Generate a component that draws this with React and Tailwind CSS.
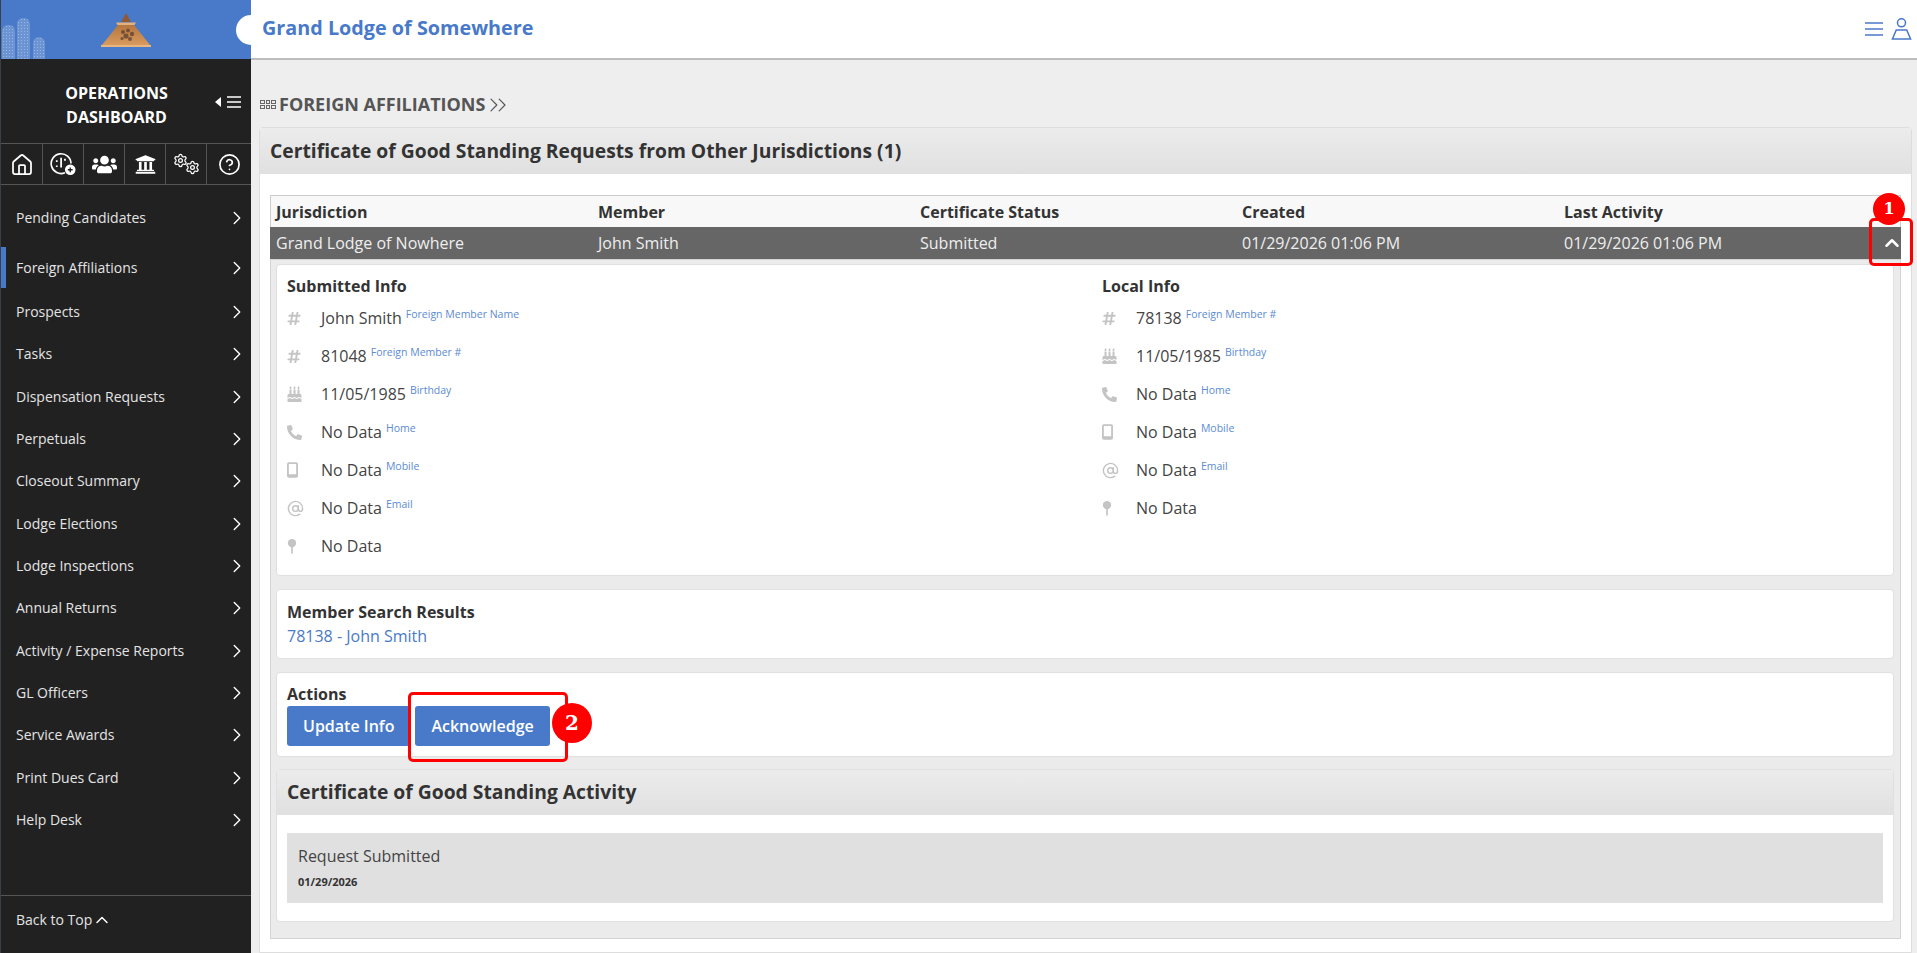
import { ChevronRight, ChevronUp, ChevronsRight, House, Settings, AtSign, CircleHelp } from 'lucide-react'
import { FaUsers, FaUniversity, FaBirthdayCake, FaHashtag, FaPhoneAlt } from 'react-icons/fa'

const NAV = [
  'Prospects', 'Tasks', 'Dispensation Requests', 'Perpetuals', 'Closeout Summary', 'Lodge Elections',
  'Lodge Inspections', 'Annual Returns', 'Activity / Expense Reports', 'GL Officers', 'Service Awards',
  'Print Dues Card', 'Help Desk',
]

const SUBMITTED = [
  { icon: 'hash', value: 'John Smith', label: 'Foreign Member Name' },
  { icon: 'hash', value: '81048', label: 'Foreign Member #' },
  { icon: 'cake', value: '11/05/1985', label: 'Birthday' },
  { icon: 'phone', value: 'No Data', label: 'Home' },
  { icon: 'mobile', value: 'No Data', label: 'Mobile' },
  { icon: 'at', value: 'No Data', label: 'Email' },
  { icon: 'pin', value: 'No Data' },
]

const LOCAL = [
  { icon: 'hash', value: '78138', label: 'Foreign Member #' },
  { icon: 'cake', value: '11/05/1985', label: 'Birthday' },
  { icon: 'phone', value: 'No Data', label: 'Home' },
  { icon: 'mobile', value: 'No Data', label: 'Mobile' },
  { icon: 'at', value: 'No Data', label: 'Email' },
  { icon: 'pin', value: 'No Data' },
]

function PinIcon() {
  return (
    <svg viewBox="0 0 12 18" className="w-[10px] h-[16px]" fill="currentColor">
      <circle cx="6" cy="5.5" r="5" />
      <rect x="5" y="10" width="2" height="8" />
    </svg>
  )
}

function MobileIcon() {
  return (
    <svg viewBox="0 0 12 17" className="w-[11px] h-[16px]" fill="currentColor">
      <path d="M2 0h8a2 2 0 0 1 2 2v13a2 2 0 0 1-2 2H2a2 2 0 0 1-2-2V2a2 2 0 0 1 2-2zm0 2v11h8V2z" fillRule="evenodd" />
    </svg>
  )
}

function InfoIcon({ name }) {
  if (name === 'hash') return <FaHashtag className="w-[14px] h-[15px]" />
  if (name === 'cake') return <FaBirthdayCake className="w-[15px] h-[16px]" />
  if (name === 'phone') return <FaPhoneAlt className="w-[15px] h-[15px]" />
  if (name === 'mobile') return <MobileIcon />
  if (name === 'at') return <AtSign className="w-[17px] h-[17px]" strokeWidth={2} />
  return <PinIcon />
}

function InfoColumn({ title, rows, className }) {
  return (
    <div className={className}>
      <h4 className="text-base font-bold text-[#333] leading-[24px] mb-[1px]">{title}</h4>
      {rows.map((row, i) => (
        <div key={i} className="h-[38px] flex items-start pt-[7px]">
          <span className="w-[34px] h-[24px] shrink-0 flex items-center text-[#c4c4c4]">
            <InfoIcon name={row.icon} />
          </span>
          <span className="text-base text-[#444] leading-[24px]">{row.value}</span>
          {row.label && <span className="ml-[4px] mt-[1px] text-[10.5px] leading-[14px] text-[#5b8bd3]">{row.label}</span>}
        </div>
      ))}
    </div>
  )
}

function GaugeIcon() {
  return (
    <svg viewBox="0 0 28 26" className="w-[27px] h-[25px]" fill="none" stroke="white">
      <path d="M15.5 21.6A10.3 10.3 0 1 1 21.8 12" strokeWidth="1.7" />
      <path d="M11.5 6v10M7 8.5v2M7 14v1.5M15.5 7v2" strokeWidth="1.8" />
      <circle cx="21" cy="18.5" r="5.5" fill="white" stroke="none" />
      <path d="M18.5 18.5h5M21 16v5" stroke="#212121" strokeWidth="1.4" />
    </svg>
  )
}

function TopIcons() {
  return (
    <div className="flex items-center gap-[8px] text-[#487ac9]">
      <svg viewBox="0 0 18 14" className="w-[18px] h-[18px]" stroke="currentColor" strokeWidth="1.5">
        <path d="M0 1h18M0 7h18M0 13h18" />
      </svg>
      <svg viewBox="0 0 22 24" className="w-[21px] h-[24px]" fill="none" stroke="currentColor" strokeWidth="1.6">
        <circle cx="11" cy="5.5" r="4.2" />
        <path d="M5.5 13h11l4 9.5H1.5z" />
      </svg>
    </div>
  )
}

function Logo() {
  return (
    <svg viewBox="0 0 50 36" className="w-[50px] h-[36px]">
      <defs>
        <linearGradient id="pyr" x1="0" y1="0" x2="0" y2="1">
          <stop offset="0" stopColor="#b5763f" />
          <stop offset="1" stopColor="#d99a5e" />
        </linearGradient>
      </defs>
      <path d="M25 0l5 9h-10z" fill="#8f5a35" />
      <path d="M15 9.5h20l-1.5 2.5h-17z" fill="#e3b27c" />
      <path d="M17 12h16l16 20H1z" fill="url(#pyr)" />
      <g fill="#5d4030" opacity="0.75">
        <circle cx="22" cy="19" r="2" />
        <circle cx="27" cy="17.5" r="2" />
        <circle cx="31" cy="21" r="2.2" />
        <circle cx="25" cy="23" r="2.6" />
        <circle cx="29" cy="26" r="2" />
        <circle cx="21" cy="25.5" r="1.6" />
      </g>
      <path d="M0 32h50v2H0z" fill="#e8b67f" />
    </svg>
  )
}

function NavChevron() {
  return <ChevronRight className="w-[22px] h-[22px] text-white" strokeWidth={1.5} />
}

export default function App() {
  return (
    <div className="h-[953px] w-full flex overflow-hidden bg-[#eeeeee] text-[#333] font-['Open_Sans',sans-serif] relative">
      {/* Sidebar */}
      <aside className="w-[251px] shrink-0 h-full bg-[#212121] border-l border-[#3b4048] flex flex-col text-white">
        <div className="h-[59px] bg-[#487ac9] flex justify-center items-start pt-[13px] relative overflow-hidden">
          <div className="absolute left-[1px] bottom-0 w-[13px] h-[34px] rounded-t-md bg-white/20 bg-[radial-gradient(circle,rgba(255,255,255,0.3)_1px,transparent_1px)] bg-[length:3px_3px]" />
          <div className="absolute left-[16px] bottom-0 w-[13px] h-[41px] rounded-t-md bg-white/20 bg-[radial-gradient(circle,rgba(255,255,255,0.3)_1px,transparent_1px)] bg-[length:3px_3px]" />
          <div className="absolute left-[32px] bottom-0 w-[12px] h-[22px] rounded-t-md bg-white/20 bg-[radial-gradient(circle,rgba(255,255,255,0.3)_1px,transparent_1px)] bg-[length:3px_3px]" />
          <Logo />
        </div>
        <div className="h-[84px] flex items-start">
          <div className="w-[230px] text-center text-base font-bold leading-[24px] pl-[1px] pt-[22px]">
            OPERATIONS<br />DASHBOARD
          </div>
          <div className="flex items-center gap-[6px] -ml-[16px] mt-[37px]">
            <span className="w-0 h-0 border-y-[5px] border-y-transparent border-r-[6px] border-r-white" />
            <svg viewBox="0 0 14 12" className="w-[14px] h-[12px]" stroke="white" strokeWidth="1.5">
              <path d="M0 1h14M0 6h14M0 11h14" />
            </svg>
          </div>
        </div>
        <div className="h-[42px] border-y border-[#555] flex">
          <div className="w-[42px] border-r border-[#555] flex items-center justify-center pt-[1px]"><House className="w-[24px] h-[24px]" strokeWidth={1.75} /></div>
          <div className="w-[41px] border-r border-[#555] flex items-center justify-center pt-[1px]"><GaugeIcon /></div>
          <div className="w-[41px] border-r border-[#555] flex items-center justify-center"><FaUsers className="w-[25px] h-[25px]" /></div>
          <div className="w-[41px] border-r border-[#555] flex items-center justify-center pt-[1px]"><FaUniversity className="w-[21px] h-[21px]" /></div>
          <div className="w-[41px] border-r border-[#555] flex items-center justify-center">
            <Settings className="w-[15px] h-[15px] shrink-0 -mt-[7px]" strokeWidth={2} />
            <Settings className="w-[15px] h-[15px] shrink-0 -ml-[3px] mt-[6px]" strokeWidth={2} />
          </div>
          <div className="flex-1 flex items-center justify-center"><CircleHelp className="w-[23px] h-[23px]" strokeWidth={1.75} /></div>
        </div>
        <nav className="pt-[12px] flex-1 text-sm text-[#e4e4e4]">
          <div className="h-[42px] mb-[8px] flex items-center justify-between pl-[15px] pr-[3px]">
            <span>Pending Candidates</span>
            <NavChevron />
          </div>
          <div className="h-[41px] mb-[3px] flex items-center justify-between pl-[10px] pr-[3px] border-l-[5px] border-[#487ac9]">
            <span>Foreign Affiliations</span>
            <NavChevron />
          </div>
          {NAV.map((item) => (
            <div key={item} className="h-[42.33px] flex items-center justify-between pl-[15px] pr-[3px]">
              <span>{item}</span>
              <NavChevron />
            </div>
          ))}
        </nav>
        <div className="h-[58px] border-t border-[#555] flex items-center pl-[15px] pb-[9px] text-sm text-[#e4e4e4]">
          Back to Top <ChevronUp className="w-[20px] h-[20px] text-white" strokeWidth={1.75} />
        </div>
      </aside>

      {/* Main */}
      <main className="flex-1 min-w-0 flex flex-col relative">
        <header className="h-[60px] shrink-0 bg-white border-b-2 border-[#bdbdbd] flex items-center justify-between pl-[11px] pr-[5px] relative">
          <span className="absolute -left-[15px] top-[15px] w-[30px] h-[30px] rounded-full bg-white" />
          <h1 className="text-[19.8px] font-bold text-[#487ac9] relative -mt-[3px]">Grand Lodge of Somewhere</h1>
          <TopIcons />
        </header>

        <div className="h-[67px] shrink-0 flex items-center pl-[9px] pt-[22px] text-[#555]">
          <div className="grid grid-cols-3 gap-[1px] w-[16px] mr-[3px]">
            {[0, 1, 2, 3, 4, 5].map((i) => (
              <span key={i} className="h-[4px] border border-[#666]" />
            ))}
          </div>
          <span className="text-[18px] font-bold">FOREIGN AFFILIATIONS</span>
          <ChevronsRight className="w-[28px] h-[28px] -ml-[1px]" strokeWidth={1} />
        </div>

        {/* Panel */}
        <section className="ml-[8px] mr-[5px] flex-1 border border-[#ddd] rounded-t-sm bg-white">
          <div className="h-[46px] bg-linear-to-b from-[#ececec] to-[#e0e0e0] flex items-center pl-[10px]">
            <h2 className="text-[19.3px] font-bold text-[#333]">Certificate of Good Standing Requests from Other Jurisdictions (1)</h2>
          </div>
          <div className="mx-[10px] mt-[21px]">
            <div className="h-[32px] border border-[#ccc] border-b-0 bg-[#f8f8f8] flex items-center pl-[5px] text-base font-bold text-[#333]">
              <span className="w-[322px]">Jurisdiction</span>
              <span className="w-[322px]">Member</span>
              <span className="w-[322px]">Certificate Status</span>
              <span className="w-[322px]">Created</span>
              <span>Last Activity</span>
            </div>
            <div className="h-[32px] bg-[#666] flex items-center pl-[6px] text-base text-[#eee] relative">
              <span className="w-[322px]">Grand Lodge of Nowhere</span>
              <span className="w-[322px]">John Smith</span>
              <span className="w-[322px]">Submitted</span>
              <span className="w-[322px]">01/29/2026 01:06 PM</span>
              <span>01/29/2026 01:06 PM</span>
              <ChevronUp className="absolute -right-[2px] top-[5px] w-[22px] h-[22px] text-white" strokeWidth={2.75} />
            </div>
            <div className="h-[680px] bg-[#ebebeb] border border-[#d4d4d4] pl-[5px] pr-[6px] pt-[4px]">
              <div className="h-[312px] bg-white border border-[#e0e0e0] rounded-sm flex pl-[10px] pt-[9px]">
                <InfoColumn title="Submitted Info" rows={SUBMITTED} className="w-[815px]" />
                <InfoColumn title="Local Info" rows={LOCAL} />
              </div>
              <div className="h-[70px] mt-[13px] bg-white border border-[#e0e0e0] rounded-sm pl-[10px] pt-[10px] text-base leading-[24px]">
                <div className="font-bold">Member Search Results</div>
                <a href="#" className="text-[#487ac9]">78138 - John Smith</a>
              </div>
              <div className="h-[85px] mt-[13px] bg-white border border-[#e0e0e0] rounded-sm pl-[10px] pt-[9px]">
                <div className="font-bold text-base leading-[24px]">Actions</div>
                <div className="flex gap-[5px]">
                  <button className="h-[40px] px-[16px] rounded-[3px] bg-[#487ac9] text-white text-base font-semibold">Update Info</button>
                  <button className="h-[40px] px-[16px] rounded-[3px] bg-[#487ac9] text-white text-base font-semibold">Acknowledge</button>
                </div>
              </div>
              <div className="mt-[12px] bg-white border border-[#e0e0e0] rounded-sm h-[153px]">
                <div className="h-[45px] bg-linear-to-b from-[#ececec] to-[#e0e0e0] flex items-center pl-[10px]">
                  <h3 className="text-[19.3px] font-bold text-[#333]">Certificate of Good Standing Activity</h3>
                </div>
                <div className="mx-[10px] mt-[18px] h-[70px] bg-[#e0e0e0] pl-[11px] pt-[11px]">
                  <div className="text-base leading-[24px] text-[#444]">Request Submitted</div>
                  <div className="text-[11px] font-bold mt-[6px] text-[#333]">01/29/2026</div>
                </div>
              </div>
            </div>
          </div>
        </section>
      </main>

      {/* Annotation markers */}
      <div className="absolute left-[1869px] top-[218px] w-[44px] h-[48px] border-[3px] border-[#f00] rounded-[5px]" />
      <div className="absolute left-[1873px] top-[193px] w-[32px] h-[32px] rounded-full bg-[#f00] text-white flex items-center justify-center font-['DejaVu_Serif',serif] font-bold text-[16px]">1</div>
      <div className="absolute left-[408px] top-[692px] w-[160px] h-[70px] border-[3px] border-[#f00] rounded-[5px]" />
      <div className="absolute left-[552px] top-[703px] w-[40px] h-[40px] rounded-full bg-[#f00] text-white flex items-center justify-center font-['DejaVu_Serif',serif] font-bold text-[20px]">2</div>
    </div>
  )
}
